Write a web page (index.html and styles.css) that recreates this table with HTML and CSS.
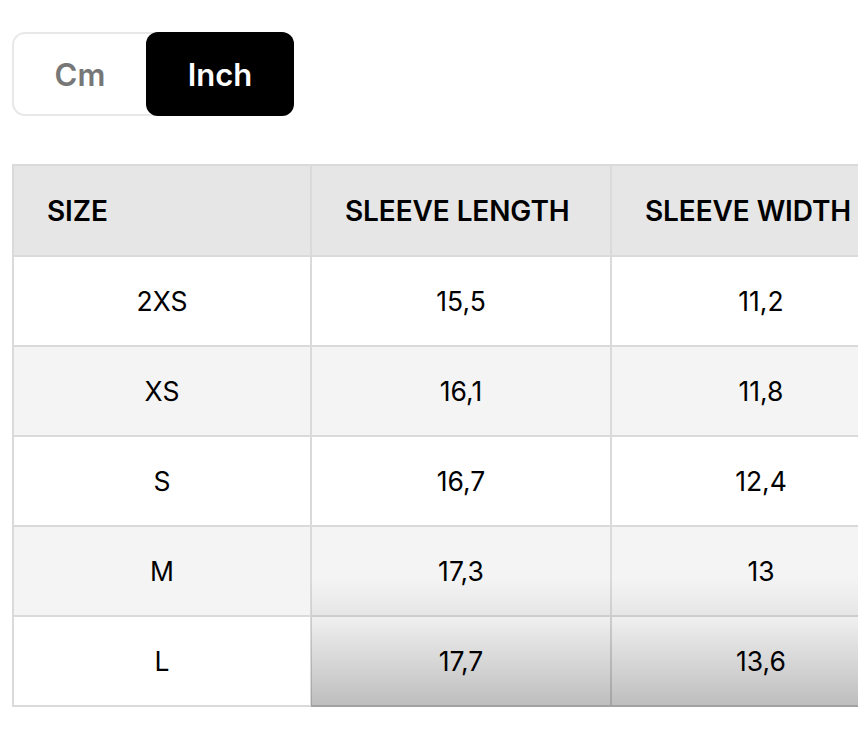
FILE: index.html
```html
<!DOCTYPE html>
<html>
<head>
<meta charset="utf-8">
<link rel="stylesheet" href="styles.css">
</head>
<body>
<div class="page">
  <div class="toggle">
    <div class="seg">Cm</div>
    <div class="seg active">Inch</div>
  </div>
  <div class="table-wrap">
    <table class="sizes">
      <colgroup>
        <col class="c1"><col class="c2"><col class="c3">
      </colgroup>
      <thead>
        <tr><th>SIZE</th><th>SLEEVE LENGTH</th><th>SLEEVE WIDTH</th></tr>
      </thead>
      <tbody>
        <tr><td>2XS</td><td>15,5</td><td>11,2</td></tr>
        <tr><td>XS</td><td>16,1</td><td>11,8</td></tr>
        <tr><td>S</td><td>16,7</td><td>12,4</td></tr>
        <tr><td>M</td><td>17,3</td><td>13</td></tr>
        <tr><td>L</td><td>17,7</td><td>13,6</td></tr>
      </tbody>
    </table>
    <div class="fade"></div>
  </div>
</div>
</body>
</html>
```
FILE: styles.css
```css
html, body {
  margin: 0;
  padding: 0;
  background: #fff;
}
.page {
  padding: 32px 12px 0 12px;
  font-family: Inter, "Liberation Sans", sans-serif;
  color: #000;
}
.toggle {
  display: flex;
  width: 282px;
  height: 84px;
  box-sizing: border-box;
  border: 2px solid #e8e8e8;
  border-radius: 13px;
  margin-bottom: 48px;
}
.seg {
  display: flex;
  align-items: center;
  justify-content: center;
  font-size: 31px;
  font-weight: 600;
  color: #777;
  width: 132px;
}
.seg.active {
  width: 148px;
  background: #000;
  color: #fff;
  border-radius: 12px;
  margin: -2px -2px -2px 0;
}
.table-wrap {
  position: relative;
  width: 846px;
  overflow: hidden;
}
.sizes {
  border-collapse: collapse;
  table-layout: fixed;
  width: 898px;
}
.c1 { width: 298px; }
.c2, .c3 { width: 300px; }
.sizes th, .sizes td {
  border: 2px solid #dadada;
  box-sizing: border-box;
  line-height: 32px;
}
.sizes th {
  background: #e6e6e6;
  height: 91px;
  text-align: left;
  padding: 0 0 0 33px;
  font-size: 28px;
  font-weight: 600;
  letter-spacing: -0.1px;
  white-space: nowrap;
}
.sizes td {
  height: 90px;
  text-align: center;
  font-size: 26.5px;
  font-weight: 400;
  padding: 0;
}
.sizes tbody tr:nth-child(even) td {
  background: #f4f4f4;
}
.sizes tbody tr:nth-child(odd) td {
  background: #fff;
}
.fade {
  position: absolute;
  left: 299px;
  right: 0;
  bottom: 0;
  height: 130px;
  background: linear-gradient(to bottom, rgba(0,0,0,0) 0%, rgba(0,0,0,0.06) 30%, rgba(0,0,0,0.26) 100%);
  pointer-events: none;
}
```
